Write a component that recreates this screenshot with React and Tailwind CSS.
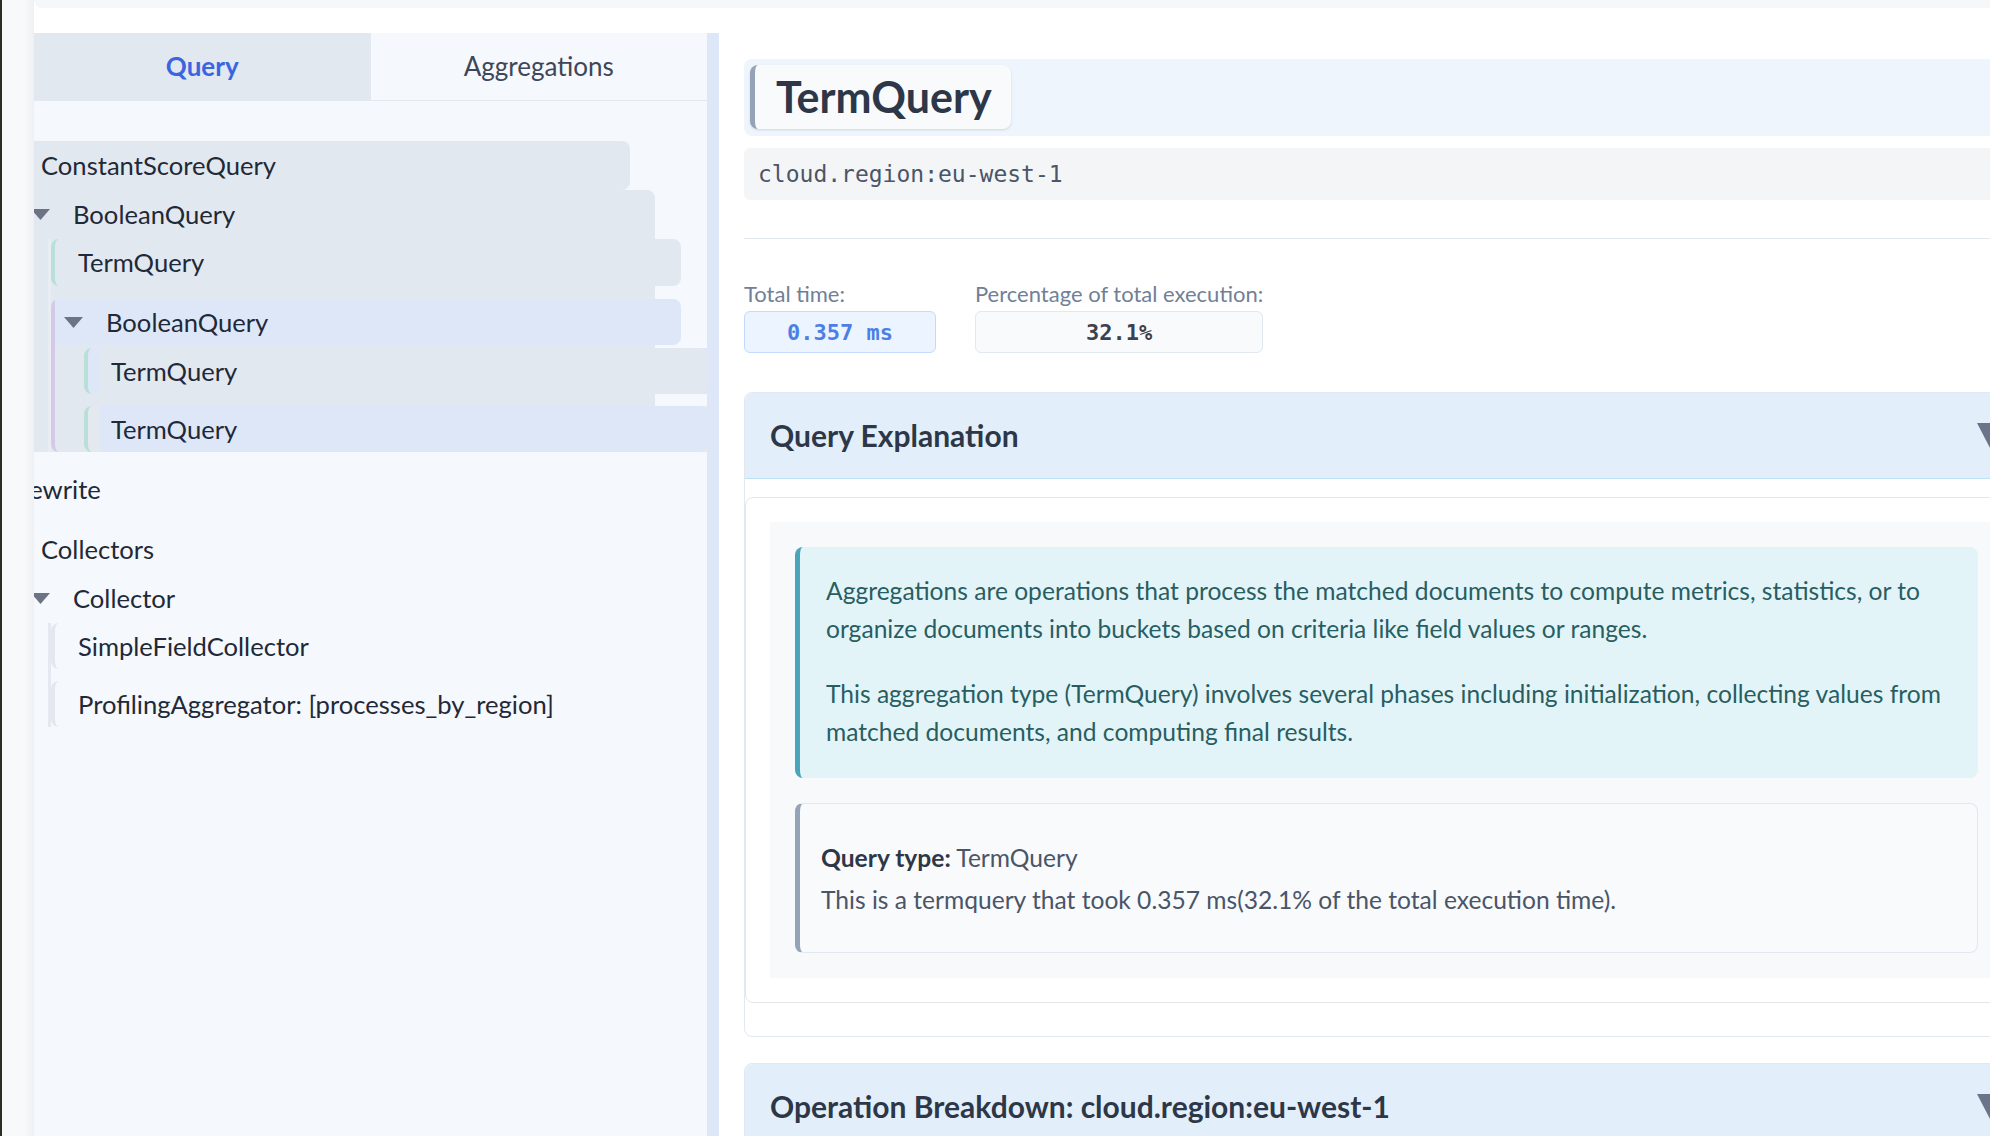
import React from "react";

const Caret = () => (
  <svg width="19" height="11" viewBox="0 0 19 11" className="shrink-0">
    <polygon points="0,0 19,0 9.5,11" fill="#6b7385" />
  </svg>
);

const BigCaret = () => (
  <svg width="26" height="25" viewBox="0 0 26 25" className="shrink-0">
    <polygon points="0,0 26,0 13,25" fill="#6b7489" />
  </svg>
);

function Leaf({ label, className = "", rowClass = "" }) {
  return (
    <div className={`flex h-[46px] rounded-l-lg border-l-4 ${className}`}>
      <div className={`ml-3 flex flex-1 items-center rounded-r-lg pl-[11px] ${rowClass}`}>
        {label}
      </div>
    </div>
  );
}

function QueryTree() {
  return (
    <div className="-ml-[48px]">
      {/* ConstantScoreQuery */}
      <div className="w-[644px]">
        <div className="flex h-[49px] items-center rounded-lg bg-slate-200 pl-[13px]">
          <Caret />
          <span className="ml-[23px]">ConstantScoreQuery</span>
        </div>
        <div className="ml-[30px] border-l-[3px] border-[#e8edf3]">
          {/* BooleanQuery */}
          <div className="w-[636px] rounded-lg border-l-4 border-slate-200 bg-slate-200">
            <div className="flex h-[49px] items-center pl-[8px]">
              <Caret />
              <span className="ml-[23px]">BooleanQuery</span>
            </div>
            <div className="ml-[25px] border-l-[3px] border-[#e8edf3]">
              <Leaf
                label="TermQuery"
                className="h-[47px] w-[630px] rounded-r-lg border-[#b8e0d8] bg-slate-200"
              />
              <div className="mt-[13px] w-[630px] rounded-l-lg border-l-4 border-[#d6c9e7]">
                <div className="flex h-[46px] items-center rounded-r-lg bg-[#dde7f8] pl-[9px]">
                  <Caret />
                  <span className="ml-[23px]">BooleanQuery</span>
                </div>
                <div className="ml-[26px] border-l-[3px] border-[#e3e8ee]">
                  <Leaf
                    label="TermQuery"
                    className="mt-[3px] w-[623px] border-[#b8e0d8] bg-[#dde7f8]"
                    rowClass="bg-slate-200"
                  />
                  <Leaf
                    label="TermQuery"
                    className="mt-[12px] w-[623px] border-[#b8e0d8] bg-[#e4e9ef]"
                    rowClass="bg-[#dde7f8]"
                  />
                </div>
              </div>
            </div>
          </div>
        </div>
      </div>

      {/* Rewrite */}
      <div className="mt-[13px] flex h-[49px] items-center pl-[28px]">Rewrite</div>

      {/* Collectors */}
      <div className="mt-[11px] w-[644px]">
        <div className="flex h-[49px] items-center pl-[13px]">
          <Caret />
          <span className="ml-[23px]">Collectors</span>
        </div>
        <div className="ml-[30px] border-l-[3px] border-transparent">
          <div className="w-[636px] border-l-4 border-transparent">
            <div className="flex h-[49px] items-center pl-[8px]">
              <Caret />
              <span className="ml-[23px]">Collector</span>
            </div>
            <div className="ml-[25px] border-l-[3px] border-[#e5e9ef]">
              <Leaf label="SimpleFieldCollector" className="w-[630px] border-[#e2e8f0]" />
              <Leaf
                label="ProfilingAggregator: [processes_by_region]"
                className="mt-[12px] w-[630px] border-[#e2e8f0]"
              />
            </div>
          </div>
        </div>
      </div>
    </div>
  );
}

function Accordion({ title, children }) {
  return (
    <div className="rounded-lg border border-[#e2e8f0]">
      <div className="flex h-[86px] items-center justify-between rounded-t-lg border-b border-[#bfe1f6] bg-[#e2effa] px-[25px]">
        <h3 className="text-[30px] font-bold text-[#2d3748]">{title}</h3>
        <BigCaret />
      </div>
      {children}
    </div>
  );
}

export default function App() {
  return (
    <div className="flex h-screen w-screen overflow-hidden bg-white font-['Lato',sans-serif]">
      <div className="flex w-[34px] shrink-0">
        <div className="w-[2px] bg-[#2b2f23]" />
        <div className="flex-1 bg-[linear-gradient(to_right,#f8f9fa_70%,#eef0f3)]" />
      </div>

      <div className="flex min-w-0 flex-1 flex-col">
        <div className="h-[8px] shrink-0 rounded-bl-xl bg-[#f6f7f9]" />
        <div className="h-[25px] shrink-0" />

        <div className="flex min-h-0 flex-1">
          <aside className="flex w-[673px] shrink-0 flex-col bg-[#f5f8fc]">
            <div className="flex h-[68px] shrink-0 border-b border-slate-200">
              <button className="flex-1 bg-slate-200 text-[26px] font-bold text-[#3b64e0]">
                Query
              </button>
              <button className="flex-1 text-[26px] text-[#3d4759]">Aggregations</button>
            </div>
            <div className="min-h-0 flex-1 overflow-hidden pt-[40px] text-[25.6px] text-[#1f2937]">
              <QueryTree />
            </div>
          </aside>

          <div className="w-[12px] shrink-0 bg-[#dde7f8]" />

          <main className="w-[1334px] shrink-0 rounded-tl-xl bg-white pl-[25px] pt-[26px]">
            <div className="w-[1285px]">
              <div className="flex h-[77px] items-start rounded-l-lg bg-[#eef5fd] pl-[6px] pt-[6px]">
                <div className="flex h-[64px] items-center rounded-lg border-l-[5px] border-[#94a3b8] bg-[#f8fafc] pl-[21px] pr-[19px] shadow-sm">
                  <h1 className="text-[43px] font-bold text-[#2d3748]">TermQuery</h1>
                </div>
              </div>

              <div className="mt-[12px] flex h-[52px] items-center rounded-md bg-[#f4f5f7] pl-[14px] font-['DejaVu_Sans_Mono',monospace] text-[23px] text-[#4a5568]">
                cloud.region:eu-west-1
              </div>

              <div className="mt-[38px] border-t border-[#e2e8f0]" />

              <div className="flex gap-[39px] pt-[38px]">
                <div className="flex flex-col">
                  <span className="text-[22px] leading-[33px] text-[#718096]">Total time:</span>
                  <div className="mt-[1px] flex h-[42px] items-center justify-center rounded-md border border-[#c3dafe] bg-[#ebf4ff] px-[42px] font-['DejaVu_Sans_Mono',monospace] text-[22px] font-bold text-[#4c7fe6]">
                    0.357 ms
                  </div>
                </div>
                <div className="flex flex-col">
                  <span className="text-[22px] leading-[33px] text-[#718096]">
                    Percentage of total execution:
                  </span>
                  <div className="mt-[1px] flex h-[42px] items-center justify-center rounded-md border border-[#e2e8f0] bg-[#f8fafc] px-[42px] font-['DejaVu_Sans_Mono',monospace] text-[22px] font-bold text-[#3c4250]">
                    32.1%
                  </div>
                </div>
              </div>

              <div className="mt-[39px]">
                <Accordion title="Query Explanation">
                  <div className="pb-[33px] pt-[18px]">
                    <div className="rounded-lg border border-[#e5e7eb] p-[24px]">
                      <div className="flex flex-col gap-[25px] bg-[#f7f9fb] p-[25px]">
                        <div className="rounded-lg border-l-[5px] border-[#4aa5ba] bg-[#e3f4f9] pb-[27px] pl-[26px] pr-[20px] pt-[25px] text-[24.6px] leading-[38px] text-[#285e61]">
                          <p className="mb-[27px]">
                            Aggregations are operations that process the matched documents to compute
                            metrics, statistics, or to organize documents into buckets based on criteria
                            like field values or ranges.
                          </p>
                          <p>
                            This aggregation type (TermQuery) involves several phases including
                            initialization, collecting values from matched documents, and computing final
                            results.
                          </p>
                        </div>
                        <div className="rounded-lg border border-l-[5px] border-[#e2e8f0] border-l-[#94a3b8] bg-[#f8fafc] pb-[33px] pl-[21px] pr-[26px] pt-[35px] text-[24.6px] leading-[38px] text-[#4a5568]">
                          <p className="mb-[4px]">
                            <span className="font-bold text-[#2d3748]">Query type:</span> TermQuery
                          </p>
                          <p>
                            This is a termquery that took 0.357 ms(32.1% of the total execution time).
                          </p>
                        </div>
                      </div>
                    </div>
                  </div>
                </Accordion>
              </div>

              <div className="mt-[26px]">
                <Accordion title="Operation Breakdown: cloud.region:eu-west-1">
                  <div className="h-[200px]" />
                </Accordion>
              </div>
            </div>
          </main>
        </div>
      </div>
    </div>
  );
}
